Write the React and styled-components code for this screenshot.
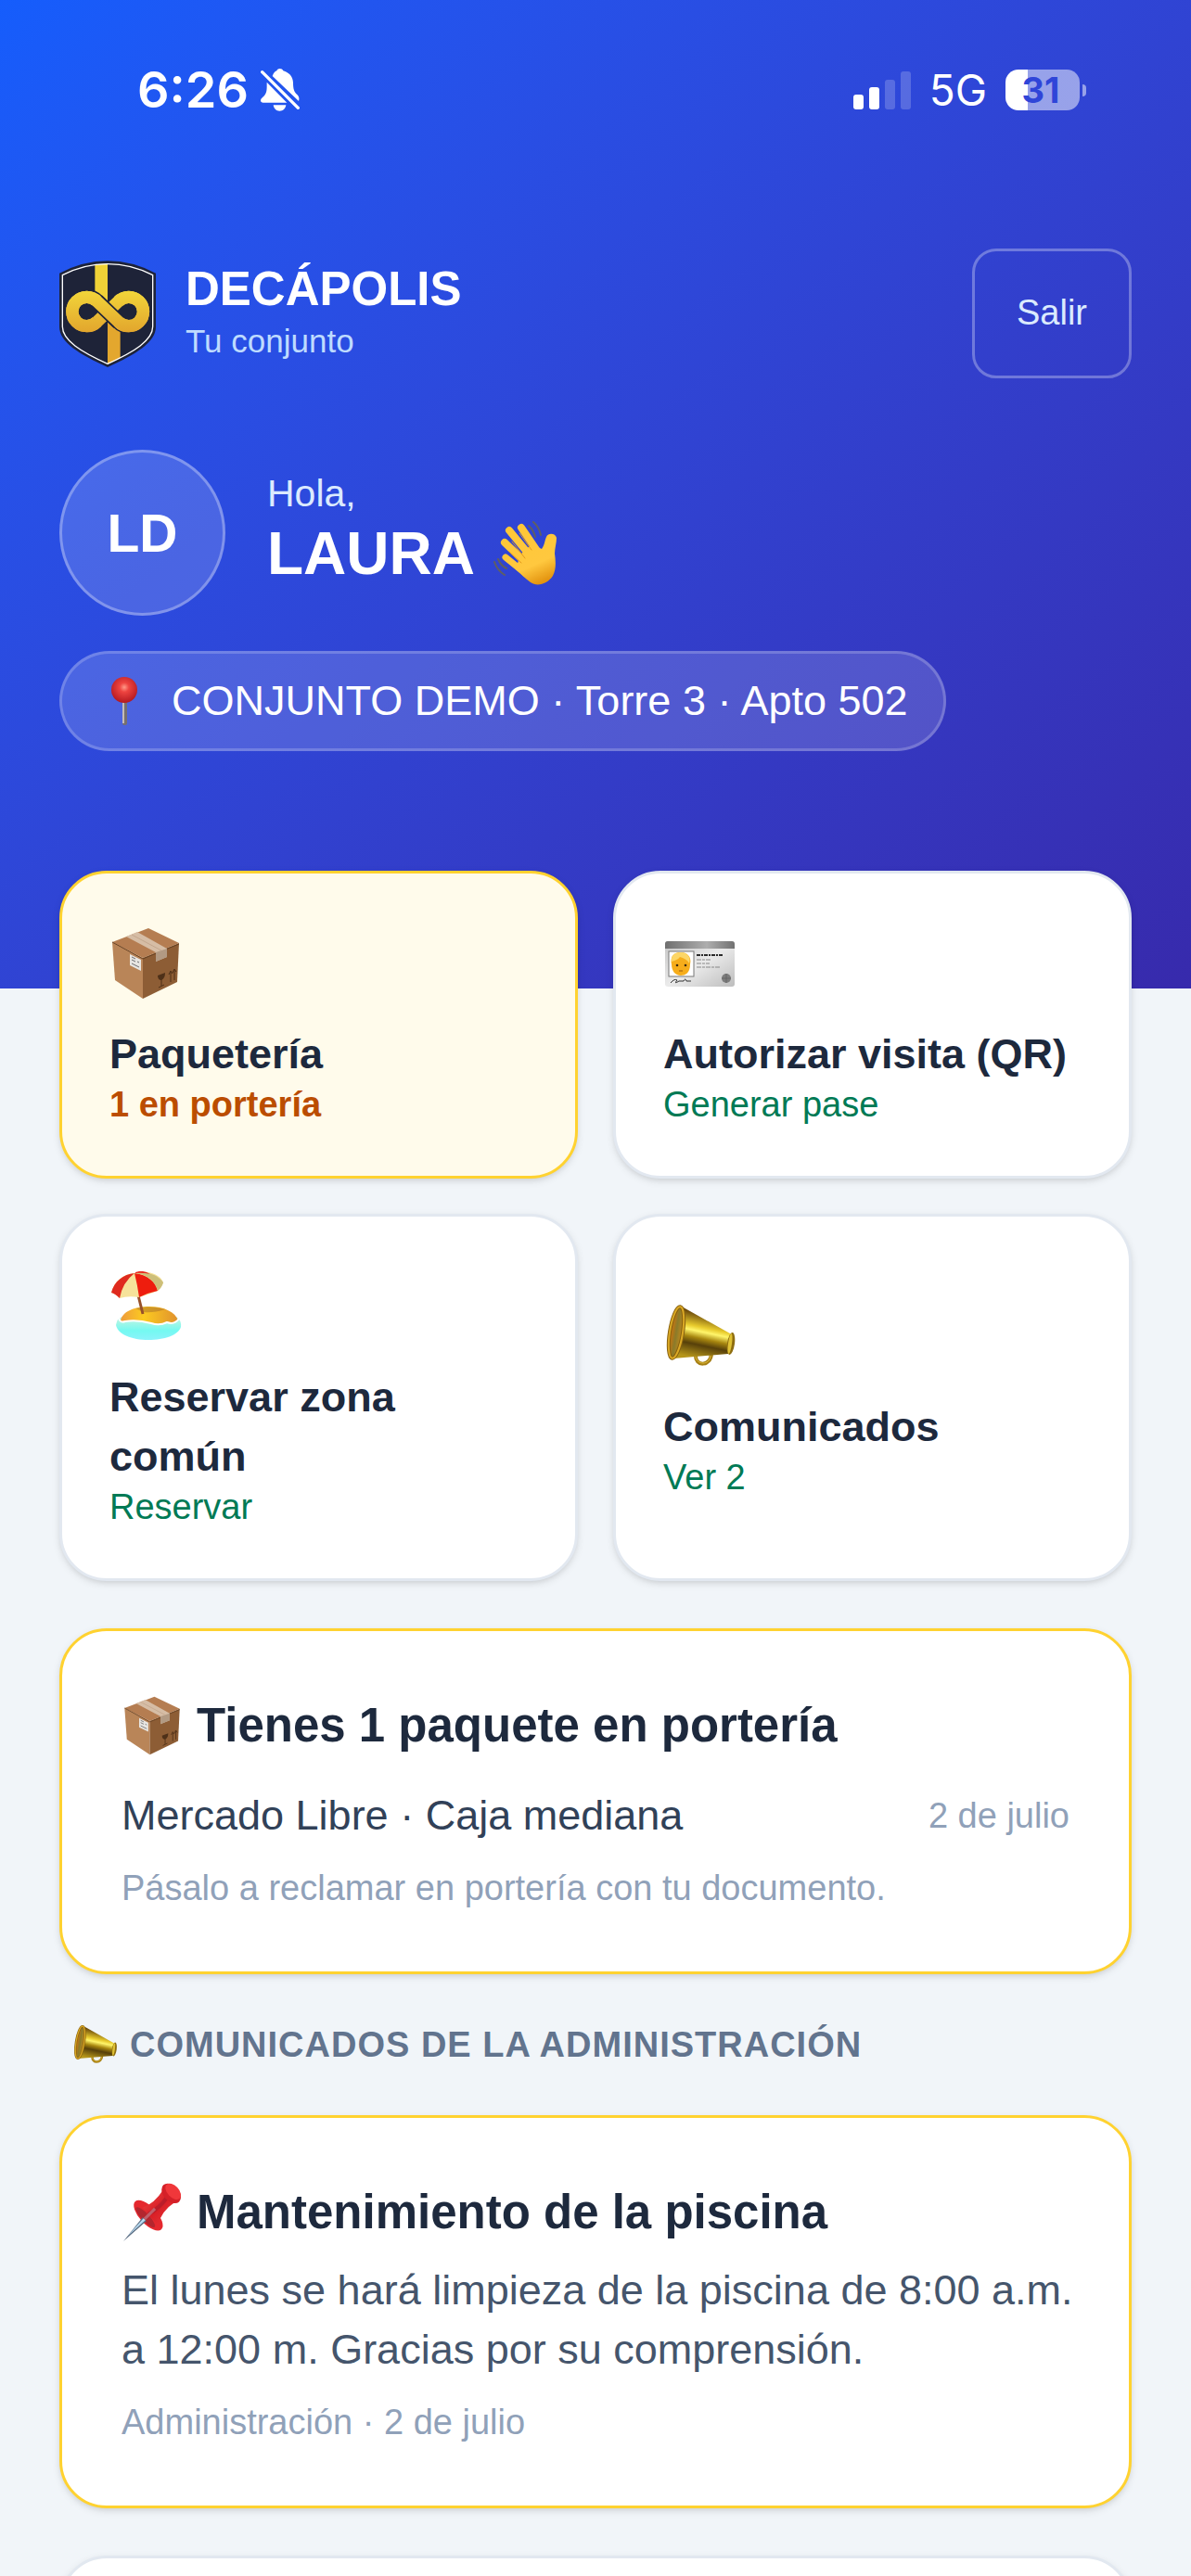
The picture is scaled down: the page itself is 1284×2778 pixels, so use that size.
import React from 'react';
import styled, { createGlobalStyle } from 'styled-components';

const GlobalStyle = createGlobalStyle`
    * {
        box-sizing: border-box;
    }

    body {
        margin: 0;
        background: #f1f5f9;
        font-family: "Liberation Sans", Arial, sans-serif;
        color: #1d293d;
    }

    h1, h2, h3, p {
        margin: 0;
    }

    svg {
        display: block;
        flex: none;
    }
`;

const Screen = styled.div`
    height: 100vh;
    overflow-x: hidden;
    overflow-y: auto;
    scrollbar-width: none;
`;

const Hero = styled.header`
    padding: 74px 64px 256px;
    background: linear-gradient(to bottom right in oklab, #155dfc, #372aac);
    color: white;
`;

const StatusBar = styled.div`
    display: flex;
    align-items: center;
    justify-content: space-between;
    height: 46px;
    margin-bottom: 148px;
    padding: 0 49px 0 84px;
    font-family: Inter, "Liberation Sans", sans-serif;
`;

const StatusGroup = styled.div`
    display: flex;
    align-items: center;
    gap: ${({ $gap }) => $gap}px;
`;

const Clock = styled.span`
    font-size: 54px;
    font-weight: 600;
    line-height: 46px;
`;

const Network = styled.span`
    font-size: 46px;
    font-weight: 400;
    line-height: 46px;
`;

const Battery = styled.div`
    display: flex;
    align-items: center;
    gap: 3px;

    span {
        width: 80px;
        padding-right: 4px;
        border-radius: 14px;
        background: linear-gradient(to right, white 30%, rgba(255, 255, 255, 0.5) 30%);
        color: #2f45d8;
        font-size: 38px;
        font-weight: 700;
        line-height: 44px;
        text-align: center;
    }

    &::after {
        content: "";
        width: 4px;
        height: 13px;
        border-radius: 0 4px 4px 0;
        background: rgba(255, 255, 255, 0.5);
    }
`;

const BrandRow = styled.div`
    display: flex;
    align-items: center;
    gap: 32px;
    margin-bottom: 77px;
`;

const Brand = styled.div`
    flex: 1;

    h1 {
        font-size: 51px;
        line-height: 60px;
    }

    p {
        color: #bedbff;
        font-size: 35px;
        line-height: 52px;
    }
`;

const LogoutButton = styled.button`
    height: 140px;
    padding: 0 45px 2px;
    border: 3px solid rgba(255, 255, 255, 0.3);
    border-radius: 26px;
    background: none;
    color: #dbeafe;
    font: 38px/51px "Liberation Sans", Arial, sans-serif;
`;

const Greeting = styled.div`
    display: flex;
    align-items: center;
    gap: 45px;
    margin-bottom: 38px;
`;

const Avatar = styled.div`
    display: grid;
    place-items: center;
    width: 179px;
    height: 179px;
    border: 3px solid rgba(255, 255, 255, 0.3);
    border-radius: 50%;
    background: rgba(255, 255, 255, 0.15);
    font-size: 57px;
    font-weight: 700;
`;

const GreetingText = styled.div`
    padding-bottom: 15px;

    p {
        color: #dbeafe;
        font-size: 41px;
        line-height: 60px;
    }

    h2 {
        display: flex;
        align-items: center;
        gap: 20px;
        font-size: 64px;
        line-height: 70px;
    }
`;

const Place = styled.div`
    display: inline-flex;
    align-items: center;
    gap: 24px;
    padding: 22px 38px;
    border: 3px solid rgba(255, 255, 255, 0.2);
    border-radius: 54px;
    background: rgba(255, 255, 255, 0.15);
    font-size: 45px;
    line-height: 58px;
    vertical-align: top;
`;

const Main = styled.main`
    display: flex;
    flex-direction: column;
    gap: 51px;
    margin-top: -127px;
    padding: 0 64px 51px;
`;

const Tiles = styled.div`
    display: grid;
    grid-template-columns: 1fr 1fr;
    gap: 38px;
`;

const Tile = styled.button`
    display: flex;
    flex-direction: column;
    align-items: flex-start;
    justify-content: center;
    padding: 59px 51px 54px;
    border: 3px solid ${({ $alert }) => $alert ? "#ffd230" : "#e2e8f0"};
    border-radius: 51px;
    background: ${({ $alert }) => $alert ? "#fffbeb" : "white"};
    box-shadow: 0 3px 9px rgba(0, 0, 0, 0.1), 0 3px 6px -3px rgba(0, 0, 0, 0.1);
    color: #1d293d;
    font-family: inherit;
    text-align: left;

    svg {
        margin-bottom: 28px;
    }
`;

const TileLabel = styled.span`
    font-size: 45px;
    font-weight: 700;
    line-height: 64px;
`;

const TileNote = styled.span`
    color: ${({ $alert }) => $alert ? "#bb4d00" : "#007a55"};
    font-size: 38px;
    font-weight: ${({ $alert }) => $alert ? 700 : 400};
    line-height: 45px;
`;

const Card = styled.article`
    min-height: 373px;
    padding: 64px;
    border: 3px solid ${({ $alert }) => $alert ? "#ffd230" : "#e2e8f0"};
    border-radius: 51px;
    background: white;
    box-shadow: 0 3px 9px rgba(0, 0, 0, 0.1), 0 3px 6px -3px rgba(0, 0, 0, 0.1);
`;

const CardTitle = styled.h3`
    display: flex;
    align-items: center;
    gap: 15px;
    font-size: 51px;
    line-height: 76px;
`;

const PackageRow = styled.div`
    display: flex;
    align-items: center;
    justify-content: space-between;
    margin: 27px 0 21px;
    color: #314158;
    font-size: 45px;
    line-height: 64px;
`;

const Muted = styled.p`
    color: #90a1b9;
    font-size: 38px;
    line-height: 51px;
`;

const SectionTitle = styled.h3`
    display: flex;
    align-items: center;
    gap: 13px;
    padding-left: 13px;
    color: #62748e;
    font-size: 38px;
    letter-spacing: 1px;
    line-height: 50px;
    text-transform: uppercase;
`;

/* runs a little into the card padding so the hour stays on the first line */
const Message = styled.p`
    margin: 14px -10px 21px 0;
    color: #45556c;
    font-size: 45px;
    line-height: 64px;
`;

const BellOff = () => (
    <svg width="42" height="46" viewBox="0 0 126 138" fill="white">
        <path d="M38 24C42 12 48 8 52 7C54 2 58 0 62 0C67 0 71 2 73 7C90 12 104 24 105 45C105 66 108 76 118 84C124 90 126 97 123 105Z" />
        <path d="M20 44L85 110H8C-2 110-2 100 4 95C15 86 20 78 20 60Z" />
        <path d="M41 118H82C80 130 72 137 61 137C51 137 43 130 41 118Z" />
        <path d="M5 11L121 127" stroke="white" strokeWidth="10" strokeLinecap="round" />
    </svg>
);

const Signal = () => (
    <svg width="62" height="41" viewBox="0 0 62 41" fill="white">
        <rect y="25" width="11" height="16" rx="3" />
        <rect x="17" y="17" width="11" height="24" rx="3" />
        <rect x="34" y="9" width="11" height="32" rx="3" opacity="0.2" />
        <rect x="51" width="11" height="41" rx="3" opacity="0.2" />
    </svg>
);

const Logo = () => (
    <svg width="104" height="115" viewBox="72 91 312 345" fill="none">
        <defs>
            <linearGradient id="gold" gradientUnits="userSpaceOnUse" x1="0" y1="188" x2="0" y2="325">
                <stop offset="0" stopColor="#f2d63a" />
                <stop offset="1" stopColor="#e2a52d" />
            </linearGradient>
        </defs>
        <path d="M72 132Q150 92 228 92Q306 92 384 132V305C384 356 320 394 228 436C136 394 72 356 72 305Z" fill="#1e2338" />
        <path d="M187 104L228 101V250H187Z" fill="#f0d237" />
        <path d="M228 270H269V406L228 426Z" fill="#e3a72e" />
        <path d="M82 138Q152 102 228 102Q304 102 374 138V305C374 349 314 386 228 425C142 386 82 349 82 305Z" stroke="white" strokeWidth="4" />
        <path d="M263 223L194 289A47 47 0 1 1 194 223L263 289A47 47 0 1 0 263 223" stroke="#1e2338" strokeWidth="50" />
        <path d="M194 289A47 47 0 1 1 194 223M263 289A47 47 0 1 0 263 223M263 223L194 289" stroke="url(#gold)" strokeWidth="40" />
        <path d="M192 221L265 291" stroke="#1e2338" strokeWidth="50" />
        <path d="M194 289A47 47 0 1 1 194 223L263 289A47 47 0 1 0 263 223" stroke="url(#gold)" strokeWidth="40" />
    </svg>
);

const Wave = () => (
    <svg width="70" height="70" viewBox="0 0 70 70" fill="none" strokeLinecap="round">
        <defs>
            <linearGradient id="skin" gradientUnits="userSpaceOnUse" x1="20" y1="5" x2="48" y2="68">
                <stop offset="0" stopColor="#ffc736" />
                <stop offset="0.7" stopColor="#ffc83f" />
                <stop offset="1" stopColor="#e39410" />
            </linearGradient>
        </defs>
        <path d="M30 7L47 32M17 10L40 38M12 23L36 46" stroke="url(#skin)" strokeWidth="8" />
        <path d="M13 39L34 56" stroke="url(#skin)" strokeWidth="7" />
        <path d="M29 36L41 25L52 30C55 26 55 22 57 17C59 12 67 13 68 18C68 24 66 29 66 35C67 43 68 51 64 59C58 68 47 71 40 66C34 62 30 57 24 52Z" fill="url(#skin)" />
        <path d="M28 13L41 31M20 22L34 40M17 33L30 45" stroke="#e39a1c" strokeWidth="1" />
        <path d="M38 5Q43 9 45 17M43 1Q49 6 51 15M5 41Q8 48 14 51M1 44Q4 53 12 58" stroke="#5f5f62" strokeWidth="2" />
    </svg>
);

const RoundPin = () => (
    <svg width="56" height="53" viewBox="-15 0 56 53">
        <defs>
            <radialGradient id="ball" cx="0.5" cy="0.4" r="0.6">
                <stop offset="0" stopColor="#ff9a88" />
                <stop offset="0.3" stopColor="#ee4440" />
                <stop offset="1" stopColor="#b31820" />
            </radialGradient>
        </defs>
        <rect x="12" y="24" width="5" height="28" rx="2" fill="#77706f" />
        <path d="M13 27V50" stroke="#c4bcb8" strokeWidth="2" />
        <circle cx="14" cy="14" r="14" fill="url(#ball)" />
    </svg>
);

const emojiBox = (small) => small
    ? { width: small, height: small, viewBox: "-3 -2 80 80" }
    : { width: 78, height: 76, viewBox: "-2 0 78 76" };

const Package = ({ small }) => (
    <svg {...emojiBox(small)}>
        <path d="M40 0L73 16L34 32L1 15Z" fill="#b57d51" />
        <path d="M1 15L34 32V76L4 56Z" fill="#b98558" />
        <path d="M73 16L34 32V76L71 58Z" fill="#8d5d35" />
        <path d="M1 15L34 33L73 17" stroke="#674122" fill="none" />
        <path d="M16 9L28 4L60 22V31L48 36V26Z" fill="#d6bda5" />
        <path d="M48 26L60 22V31L48 36Z" fill="#b29a83" />
        <path d="M22 7L54 24" stroke="#c3a78e" />
        <path d="M20 28L32 34V46L20 40Z" fill="#e8e6e2" />
        <path d="M22 31L26 33M22 34L26 36M28 36L30 37M22 38L30 42" stroke="#6d6d70" />
        <path d="M50 51L58 48Q58 54 54 56Q50 56 50 51Z" fill="#4e3018" />
        <path d="M54 55V62M51 64L57 61M64 47V58M68 45V56M62 50L64 46L66 49M66 48L68 44L70 47" stroke="#4e3018" fill="none" />
    </svg>
);

const IdCard = () => (
    <svg {...emojiBox()}>
        <defs>
            <linearGradient id="plate" x1="0" y1="0" x2="1" y2="1">
                <stop offset="0" stopColor="#c4c4c4" />
                <stop offset="0.5" stopColor="#ebebeb" />
                <stop offset="1" stopColor="#bdbdbd" />
            </linearGradient>
            <linearGradient id="strip">
                <stop offset="0" stopColor="#6f6f6f" />
                <stop offset="0.6" stopColor="#aeaeae" />
                <stop offset="1" stopColor="#717171" />
            </linearGradient>
        </defs>
        <rect y="14" width="75" height="49" rx="3" fill="url(#plate)" />
        <path d="M0 22V17Q0 14 3 14H72Q75 14 75 17V22Z" fill="url(#strip)" />
        <rect x="4" y="25" width="27" height="27" fill="white" stroke="#777" />
        <path d="M7 39C5 28 12 26 17 26C23 26 29 30 27 39C27 48 22 51 17 51C11 51 7 46 7 39Z" fill="#f6ad1b" />
        <path d="M7 36C6 28 12 26 18 26C25 27 28 32 26 38C24 34 20 32 16 31C14 34 10 35 7 36Z" fill="#fcd667" />
        <circle cx="13" cy="40" r="1.3" fill="#3c2a12" />
        <circle cx="22" cy="40" r="1.3" fill="#3c2a12" />
        <path d="M15 46H19" stroke="#9c5a10" />
        <path d="M34 29H63" stroke="#2b2b2b" strokeWidth="2" strokeDasharray="4 1 2 1" />
        <path d="M34 34H50M34 38H48M34 42H60" stroke="#888" strokeDasharray="5 1 3 1" />
        <path d="M6 59Q10 54 13 56Q9 61 15 57L20 57Q22 53 23 57L28 57" stroke="#333" fill="none" />
        <circle cx="66" cy="54" r="5" fill="#7c7c7c" />
        <path d="M61 54H71M66 49V59" stroke="#666" />
    </svg>
);

const Beach = () => (
    <svg {...emojiBox()}>
        <defs>
            <linearGradient id="water" x1="0" y1="0" x2="0" y2="1">
                <stop offset="0" stopColor="#c9f4e0" />
                <stop offset="0.6" stopColor="#74f9f1" />
                <stop offset="1" stopColor="#8cf3fb" />
            </linearGradient>
            <linearGradient id="sand">
                <stop offset="0" stopColor="#ee9b3c" />
                <stop offset="0.4" stopColor="#fccb20" />
                <stop offset="1" stopColor="#e0912e" />
            </linearGradient>
        </defs>
        <path d="M5 58Q6 50 12 49H70Q76 53 75 60C72 69 57 74 40 74C22 74 7 68 5 58Z" fill="url(#water)" />
        <path d="M10 53C12 43 26 38 41 38C57 38 69 44 72 53Q68 57 60 55Q52 59 43 56Q25 51 13 54Q10 55 10 53Z" fill="url(#sand)" />
        <path d="M8 50Q9 56 15 54Q28 52 43 56Q52 59 60 55Q68 58 73 51" fill="none" stroke="white" strokeWidth="2" />
        <path d="M26 40Q40 36 58 41Q45 45 35 44Z" fill="#a66d2c" opacity="0.5" />
        <path d="M29 26L34 46" stroke="#96512b" strokeWidth="3" />
        <path d="M25 2C35-2 53 2 56 12Q54 18 50 21Q40 25 30 28Q18 26 9 29Q4 24 0 23C3 11 12 3 25 2Z" fill="#f6e29a" />
        <path d="M25 2C13 3 3 11 0 23Q4 24 9 29Q12 12 25 2Z" fill="#df2a1e" />
        <path d="M25 2Q28 14 30 28Q40 23 50 21C48 12 40 4 25 2Z" fill="#ee1d0e" />
        <path d="M25 2C38 3 47 10 50 21Q55 17 56 12C50 3 38 0 25 2Z" fill="#cdbf7a" />
        <path d="M26 1Q34-2 42 3Q34 1 26 2Z" fill="#e8221a" />
    </svg>
);

const Megaphone = ({ small }) => (
    <svg {...emojiBox(small)}>
        <defs>
            <linearGradient id="brass" gradientUnits="userSpaceOnUse" x1="46" y1="15" x2="36" y2="62">
                <stop offset="0" stopColor="#6d4b0c" />
                <stop offset="0.3" stopColor="#e8cb2d" />
                <stop offset="0.4" stopColor="#fff56b" />
                <stop offset="0.55" stopColor="#a7860f" />
                <stop offset="0.7" stopColor="#57400a" />
                <stop offset="1" stopColor="#b5951a" />
            </linearGradient>
            <linearGradient id="mouth">
                <stop offset="0" stopColor="#d8710a" />
                <stop offset="0.5" stopColor="#8a7b2a" />
                <stop offset="1" stopColor="#c58a1e" />
            </linearGradient>
        </defs>
        <path d="M33 58C32 71 49 71 50 57" stroke="#a67f14" strokeWidth="4" fill="none" />
        <path d="M33 60C34 69 48 70 49 59" stroke="#e0bd3c" strokeWidth="1" fill="none" />
        <path d="M18 6L70 35Q74 46 68 57L9 62Z" fill="url(#brass)" />
        <ellipse cx="71" cy="46" rx="4" ry="12" transform="rotate(8 71 46)" fill="#8e6d10" />
        <ellipse cx="70" cy="46" rx="2" ry="11" transform="rotate(8 70 46)" fill="#dfc134" />
        <ellipse cx="12" cy="34" rx="7" ry="28" transform="rotate(9 12 34)" fill="url(#mouth)" stroke="#87610f" strokeWidth="4" />
        <ellipse cx="12" cy="34" rx="7" ry="28" transform="rotate(9 12 34)" fill="none" stroke="#dba925" strokeWidth="2" />
    </svg>
);

const Pushpin = ({ small }) => (
    <svg width={small} height={small} viewBox="-2 0 64 64">
        <defs>
            <linearGradient id="plastic" x1="0" y1="0" x2="1" y2="1">
                <stop offset="0" stopColor="#f04a48" />
                <stop offset="0.5" stopColor="#d81f26" />
                <stop offset="1" stopColor="#ef3a3c" />
            </linearGradient>
        </defs>
        <ellipse cx="26" cy="35" rx="9" ry="20" transform="rotate(-43 26 35)" fill="#e5282e" />
        <ellipse cx="23" cy="37" rx="4" ry="14" transform="rotate(-43 23 37)" fill="#b3262e" />
        <path d="M20 27Q33 22 41 9L54 21Q40 30 36 45Z" fill="url(#plastic)" />
        <path d="M26 34Q38 27 45 17" stroke="#a61c2c" strokeWidth="4" fill="none" opacity="0.6" />
        <ellipse cx="50" cy="12" rx="8" ry="12" transform="rotate(-43 50 12)" fill="#d42028" />
        <ellipse cx="52" cy="10" rx="6" ry="10" transform="rotate(-43 52 10)" fill="#f0373a" />
        <path d="M0 62L20 37L24 41Z" fill="#5a6b80" />
        <path d="M4 57L21 38L23 40Z" fill="#b8dcf2" />
        <path d="M22 39L33 28" stroke="#c0606c" strokeWidth="3" />
    </svg>
);

const tiles = [
    { icon: <Package />, label: "Paquetería", note: "1 en portería", alert: true },
    { icon: <IdCard />, label: "Autorizar visita (QR)", note: "Generar pase" },
    { icon: <Beach />, label: "Reservar zona común", note: "Reservar" },
    { icon: <Megaphone />, label: "Comunicados", note: "Ver 2" },
];

const App = () => (
    <Screen>
        <GlobalStyle />
        <Hero>
            <StatusBar>
                <StatusGroup $gap={13}>
                    <Clock>6:26</Clock>
                    <BellOff />
                </StatusGroup>
                <StatusGroup $gap={20}>
                    <Signal />
                    <Network>5G</Network>
                    <Battery><span>31</span></Battery>
                </StatusGroup>
            </StatusBar>
            <BrandRow>
                <Logo />
                <Brand>
                    <h1>DECÁPOLIS</h1>
                    <p>Tu conjunto</p>
                </Brand>
                <LogoutButton type="button">Salir</LogoutButton>
            </BrandRow>
            <Greeting>
                <Avatar>LD</Avatar>
                <GreetingText>
                    <p>Hola,</p>
                    <h2>LAURA <Wave /></h2>
                </GreetingText>
            </Greeting>
            <Place>
                <RoundPin />
                CONJUNTO DEMO · Torre 3 · Apto 502
            </Place>
        </Hero>
        <Main>
            <Tiles>
                {tiles.map(({ icon, label, note, alert }) => (
                    <Tile type="button" key={label} $alert={alert}>
                        {icon}
                        <TileLabel>{label}</TileLabel>
                        <TileNote $alert={alert}>{note}</TileNote>
                    </Tile>
                ))}
            </Tiles>
            <Card $alert>
                <CardTitle><Package small={66} />Tienes 1 paquete en portería</CardTitle>
                <PackageRow>
                    <span>Mercado Libre · Caja mediana</span>
                    <Muted as="time">2 de julio</Muted>
                </PackageRow>
                <Muted>Pásalo a reclamar en portería con tu documento.</Muted>
            </Card>
            <SectionTitle><Megaphone small={50} />Comunicados de la administración</SectionTitle>
            <Card $alert>
                <CardTitle><Pushpin small={66} />Mantenimiento de la piscina</CardTitle>
                <Message>El lunes se hará limpieza de la piscina de 8:00 a.m. a 12:00 m. Gracias por su comprensión.</Message>
                <Muted>Administración · 2 de julio</Muted>
            </Card>
            <Card />
        </Main>
    </Screen>
);

export default App;
